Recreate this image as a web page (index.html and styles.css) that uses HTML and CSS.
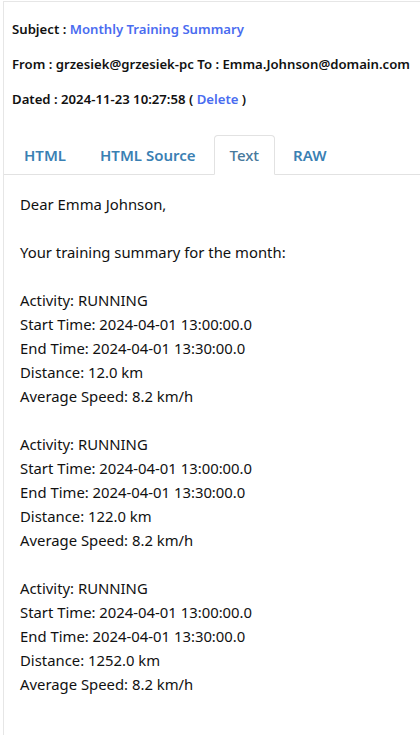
FILE: index.html
```html
<!DOCTYPE html>
<html>
<head>
<meta charset="utf-8">
<link rel="stylesheet" href="styles.css">
</head>
<body>
<div class="mail">
  <div class="meta">
    <p class="row">Subject : <a class="link" href="#">Monthly Training Summary</a></p>
    <p class="row">From : grzesiek@grzesiek-pc To : Emma.Johnson@domain.com</p>
    <p class="row">Dated : 2024-11-23 10:27:58 ( <a class="link" href="#">Delete</a> )</p>
  </div>
  <ul class="tabs">
    <li class="tab"><a href="#">HTML</a></li>
    <li class="tab"><a href="#">HTML Source</a></li>
    <li class="tab active"><a href="#">Text</a></li>
    <li class="tab"><a href="#">RAW</a></li>
  </ul>
  <div class="pane"><pre class="body-text">Dear Emma Johnson,

Your training summary for the month:

Activity: RUNNING
Start Time: 2024-04-01 13:00:00.0
End Time: 2024-04-01 13:30:00.0
Distance: 12.0 km
Average Speed: 8.2 km/h

Activity: RUNNING
Start Time: 2024-04-01 13:00:00.0
End Time: 2024-04-01 13:30:00.0
Distance: 122.0 km
Average Speed: 8.2 km/h

Activity: RUNNING
Start Time: 2024-04-01 13:00:00.0
End Time: 2024-04-01 13:30:00.0
Distance: 1252.0 km
Average Speed: 8.2 km/h</pre></div>
</div>
</body>
</html>
```
FILE: styles.css
```css
html, body {
  margin: 0;
  padding: 0;
  background: #fff;
}
body {
  font-family: "Noto Sans", "Open Sans", sans-serif;
  color: #111;
}
.mail {
  margin: 1px 0 0 3px;
  border-top: 1px solid #e6e6e6;
  border-left: 1px solid #e6e6e6;
  min-height: 740px;
}
.meta {
  padding: 17px 8px 0 8px;
}
.row {
  margin: 0 0 15px 0;
  font-size: 13.17px;
  line-height: 20px;
  font-weight: 600;
  white-space: nowrap;
}
.link {
  color: #4a6cf0;
  text-decoration: none;
}
.tabs {
  list-style: none;
  margin: 26px 0 0 0;
  padding: 0 0 0 4px;
  display: flex;
  border-bottom: 1px solid #e2e2e2;
}
.tab {
  margin: 0 2px -1px 0;
}
.tab a {
  display: block;
  padding: 9px 15px;
  line-height: 20px;
  font-size: 15px;
  font-weight: 600;
  color: #3a80b3;
  text-decoration: none;
  border: 1px solid transparent;
  border-radius: 4px 4px 0 0;
}
.tab.active a {
  border-color: #e2e2e2 #e2e2e2 #fff #e2e2e2;
  background: #fff;
  color: #47799c;
  font-weight: 500;
}
.pane {
  padding: 17px 16px;
}
.body-text {
  margin: 0;
  font-family: "Noto Sans", "Open Sans", sans-serif;
  font-size: 14.85px;
  line-height: 24px;
  white-space: pre-wrap;
  color: #111;
}
```
